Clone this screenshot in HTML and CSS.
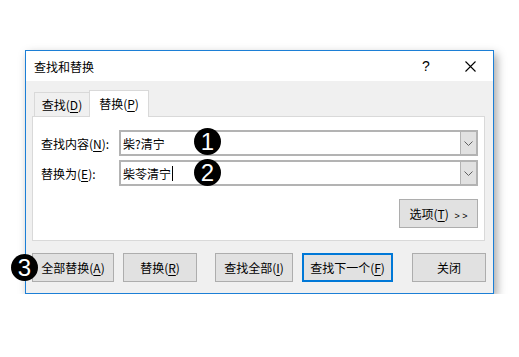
FILE: index.html
```html
<!DOCTYPE html>
<html lang="zh-CN">
<head>
    <meta charset="UTF-8">
    <title>查找和替换</title>
    <link rel="stylesheet" href="styles.css">
</head>
<body>
    <!-- Dialog -->
    <div class="dialog">
        <div class="titlebar">
            <span class="title">查找和替换</span>
            <span class="help">?</span>
            <span class="close">
                <svg width="11" height="11" viewBox="0 0 11 11"><path d="M0.5 0.5 L10.5 10.5 M10.5 0.5 L0.5 10.5" stroke="#000" stroke-width="1.1" fill="none"/></svg>
            </span>
        </div>

        <div class="tabs">
            <div class="tab">查找(<u>D</u>)</div>
            <div class="tab active">替换(<u>P</u>)</div>
        </div>

        <div class="panel">
            <div class="row">
                <label class="label">查找内容(<u>N</u>):</label>
                <div class="combo">
                    <span class="value">柴?清宁</span>
                    <span class="drop">
                        <svg width="9" height="5" viewBox="0 0 9 5"><path d="M0.5 0.5 L4.5 4.5 L8.5 0.5" stroke="#606060" fill="none"/></svg>
                    </span>
                </div>
            </div>
            <div class="row">
                <label class="label">替换为(<u>E</u>):</label>
                <div class="combo">
                    <span class="value">柴苓清宁<i class="caret"></i></span>
                    <span class="drop">
                        <svg width="9" height="5" viewBox="0 0 9 5"><path d="M0.5 0.5 L4.5 4.5 L8.5 0.5" stroke="#606060" fill="none"/></svg>
                    </span>
                </div>
            </div>
            <div class="options-row">
                <button class="btn options">选项(<u>T</u>) <span class="arrows">&gt; &gt;</span></button>
            </div>
        </div>

        <div class="buttons">
            <button class="btn b-all">全部替换(<u>A</u>)</button>
            <button class="btn b-one">替换(<u>R</u>)</button>
            <button class="btn b-findall">查找全部(<u>I</u>)</button>
            <button class="btn b-next">查找下一个(<u>F</u>)</button>
            <button class="btn b-close">关闭</button>
        </div>
    </div>

    <!-- Step markers -->
    <span class="badge badge-1">1</span>
    <span class="badge badge-2">2</span>
    <span class="badge badge-3">3</span>
</body>
</html>
```

FILE: styles.css
```css
/* General */
body {
    margin: 0;
    background-color: #fff;
    font-family: "Noto Sans CJK SC", "Liberation Sans", sans-serif;
    font-size: 12px;
    color: #000;
}
u {
    text-decoration: underline;
    text-underline-offset: 2px;
}

/* Dialog frame */
.dialog {
    margin: 50px 0 0 25px;
    width: 469px;
    height: 244px;
    box-sizing: border-box;
    border: 1px solid #1c7fd6;
    background-color: #f0f0f0;
    box-shadow: 3px 4px 9px rgba(0, 0, 0, 0.35);
    display: flex;
    flex-direction: column;
}
.titlebar {
    height: 30px;
    background-color: #fff;
    display: flex;
    align-items: center;
    padding-left: 8px;
}
.title {
    flex: 1;
}
.help {
    width: 44px;
    text-align: center;
    font-family: "Liberation Sans", sans-serif;
    font-size: 14px;
}
.close {
    width: 45px;
    display: flex;
    justify-content: center;
}

/* Tabs */
.tabs {
    display: flex;
    align-items: flex-end;
    margin-top: 9px;
    padding-left: 8px;
    height: 26px;
}
.tab {
    box-sizing: border-box;
    width: 55px;
    height: 24px;
    border: 1px solid #d9d9d9;
    border-bottom: none;
    border-right: none;
    text-align: center;
    line-height: 24px;
    color: #000;
}
.tab.active {
    width: 60px;
    height: 27px;
    margin-bottom: -1px;
    border-right: 1px solid #d9d9d9;
    background-color: #fff;
    line-height: 25px;
    position: relative;
    z-index: 1;
}

/* Panel */
.panel {
    margin: 0 8px 0 6px;
    height: 125px;
    box-sizing: border-box;
    border: 1px solid #d9d9d9;
    background-color: #fff;
    padding: 13px 6px 0 8px;
    display: flex;
    flex-direction: column;
    gap: 4px;
}
.row {
    display: flex;
    align-items: center;
    height: 26px;
}
.label {
    width: 78px;
}
.combo {
    flex: 1;
    height: 26px;
    box-sizing: border-box;
    border: 2px solid #b3b3b3;
    display: flex;
    align-items: center;
}
.value {
    flex: 1;
    padding-left: 2px;
    display: flex;
    align-items: center;
}
.caret {
    display: inline-block;
    width: 1px;
    height: 15px;
    background-color: #000;
    margin-left: 1px;
}
.drop {
    width: 15px;
    height: 100%;
    background-color: #e1e1e1;
    border-left: 1px solid #b3b3b3;
    display: flex;
    align-items: center;
    justify-content: center;
}
.options-row {
    display: flex;
    justify-content: flex-end;
    margin-top: 9px;
}

/* Buttons */
.btn {
    box-sizing: border-box;
    height: 29px;
    padding: 0;
    border: 1px solid #adadad;
    background-color: #e1e1e1;
    font-family: inherit;
    font-size: 12px;
    color: #000;
}
.options {
    width: 79px;
}
.arrows {
    font-family: "Liberation Sans", sans-serif;
    font-size: 9px;
    margin-left: 3px;
}
.buttons {
    display: flex;
    margin-top: 12px;
    padding-left: 6px;
}
.b-all {
    width: 82px;
}
.b-one {
    width: 74px;
    margin-left: 9px;
}
.b-findall {
    width: 78px;
    margin-left: 18px;
}
.b-next {
    width: 91px;
    margin-left: 9px;
    border: 2px solid #0078d7;
}
.b-close {
    width: 74px;
    margin-left: 19px;
}

/* Step markers */
.badge {
    position: absolute;
    width: 27px;
    height: 27px;
    border-radius: 50%;
    background-color: #000;
    color: #fff;
    font-family: "Liberation Sans", sans-serif;
    font-size: 24px;
    line-height: 27px;
    text-align: center;
}
.badge-1 {
    left: 194px;
    top: 128px;
}
.badge-2 {
    left: 194px;
    top: 159px;
}
.badge-3 {
    left: 11px;
    top: 254px;
}
```
